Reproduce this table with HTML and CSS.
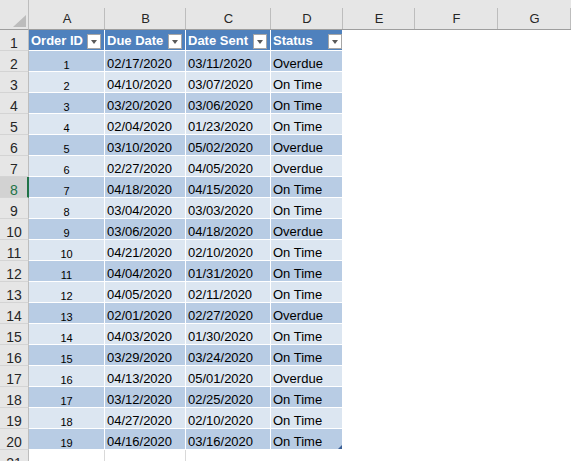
FILE: index.html
```html
<!DOCTYPE html>
<html>
<head>
<meta charset="utf-8">
<link rel="stylesheet" href="styles.css">
</head>
<body>
<div class="sheet">
  <div class="row hdr">
    <div class="corner"><span class="tri"></span></div>
    <div class="ch">A</div><div class="ch">B</div><div class="ch">C</div><div class="ch">D</div><div class="ch">E</div><div class="ch">F</div><div class="ch">G</div>
  </div>
  <div class="row">
    <div class="rh">1</div>
    <div class="th"><span class="tt">Order ID</span><span class="fb"><span class="ar"></span></span></div>
    <div class="th"><span class="tt">Due Date</span><span class="fb"><span class="ar"></span></span></div>
    <div class="th"><span class="tt">Date Sent</span><span class="fb"><span class="ar"></span></span></div>
    <div class="th last"><span class="tt">Status</span><span class="fb fb-end"><span class="ar"></span></span></div>
    <div class="e"></div><div class="e"></div><div class="e"></div>
  </div>
  <div class="row"><div class="rh">2</div><div class="c id b1">1</div><div class="c b1">02/17/2020</div><div class="c b1">03/11/2020</div><div class="c b1 last">Overdue</div><div class="e"></div><div class="e"></div><div class="e"></div></div>
  <div class="row"><div class="rh">3</div><div class="c id b2">2</div><div class="c b2">04/10/2020</div><div class="c b2">03/07/2020</div><div class="c b2 last">On Time</div><div class="e"></div><div class="e"></div><div class="e"></div></div>
  <div class="row"><div class="rh">4</div><div class="c id b1">3</div><div class="c b1">03/20/2020</div><div class="c b1">03/06/2020</div><div class="c b1 last">On Time</div><div class="e"></div><div class="e"></div><div class="e"></div></div>
  <div class="row"><div class="rh">5</div><div class="c id b2">4</div><div class="c b2">02/04/2020</div><div class="c b2">01/23/2020</div><div class="c b2 last">On Time</div><div class="e"></div><div class="e"></div><div class="e"></div></div>
  <div class="row"><div class="rh">6</div><div class="c id b1">5</div><div class="c b1">03/10/2020</div><div class="c b1">05/02/2020</div><div class="c b1 last">Overdue</div><div class="e"></div><div class="e"></div><div class="e"></div></div>
  <div class="row"><div class="rh">7</div><div class="c id b2">6</div><div class="c b2">02/27/2020</div><div class="c b2">04/05/2020</div><div class="c b2 last">Overdue</div><div class="e"></div><div class="e"></div><div class="e"></div></div>
  <div class="row"><div class="rh sel">8</div><div class="c id b1">7</div><div class="c b1">04/18/2020</div><div class="c b1">04/15/2020</div><div class="c b1 last">On Time</div><div class="e"></div><div class="e"></div><div class="e"></div></div>
  <div class="row"><div class="rh">9</div><div class="c id b2">8</div><div class="c b2">03/04/2020</div><div class="c b2">03/03/2020</div><div class="c b2 last">On Time</div><div class="e"></div><div class="e"></div><div class="e"></div></div>
  <div class="row"><div class="rh">10</div><div class="c id b1">9</div><div class="c b1">03/06/2020</div><div class="c b1">04/18/2020</div><div class="c b1 last">Overdue</div><div class="e"></div><div class="e"></div><div class="e"></div></div>
  <div class="row"><div class="rh">11</div><div class="c id b2">10</div><div class="c b2">04/21/2020</div><div class="c b2">02/10/2020</div><div class="c b2 last">On Time</div><div class="e"></div><div class="e"></div><div class="e"></div></div>
  <div class="row"><div class="rh">12</div><div class="c id b1">11</div><div class="c b1">04/04/2020</div><div class="c b1">01/31/2020</div><div class="c b1 last">On Time</div><div class="e"></div><div class="e"></div><div class="e"></div></div>
  <div class="row"><div class="rh">13</div><div class="c id b2">12</div><div class="c b2">04/05/2020</div><div class="c b2">02/11/2020</div><div class="c b2 last">On Time</div><div class="e"></div><div class="e"></div><div class="e"></div></div>
  <div class="row"><div class="rh">14</div><div class="c id b1">13</div><div class="c b1">02/01/2020</div><div class="c b1">02/27/2020</div><div class="c b1 last">Overdue</div><div class="e"></div><div class="e"></div><div class="e"></div></div>
  <div class="row"><div class="rh">15</div><div class="c id b2">14</div><div class="c b2">04/03/2020</div><div class="c b2">01/30/2020</div><div class="c b2 last">On Time</div><div class="e"></div><div class="e"></div><div class="e"></div></div>
  <div class="row"><div class="rh">16</div><div class="c id b1">15</div><div class="c b1">03/29/2020</div><div class="c b1">03/24/2020</div><div class="c b1 last">On Time</div><div class="e"></div><div class="e"></div><div class="e"></div></div>
  <div class="row"><div class="rh">17</div><div class="c id b2">16</div><div class="c b2">04/13/2020</div><div class="c b2">05/01/2020</div><div class="c b2 last">Overdue</div><div class="e"></div><div class="e"></div><div class="e"></div></div>
  <div class="row"><div class="rh">18</div><div class="c id b1">17</div><div class="c b1">03/12/2020</div><div class="c b1">02/25/2020</div><div class="c b1 last">On Time</div><div class="e"></div><div class="e"></div><div class="e"></div></div>
  <div class="row"><div class="rh">19</div><div class="c id b2">18</div><div class="c b2">04/27/2020</div><div class="c b2">02/10/2020</div><div class="c b2 last">On Time</div><div class="e"></div><div class="e"></div><div class="e"></div></div>
  <div class="row"><div class="rh">20</div><div class="c id b1">19</div><div class="c b1">04/16/2020</div><div class="c b1">03/16/2020</div><div class="c b1 last handle">On Time</div><div class="e"></div><div class="e"></div><div class="e"></div></div>
  <div class="row"><div class="rh">21</div><div class="g"></div><div class="g"></div><div class="e"></div><div class="e"></div><div class="e"></div><div class="e"></div><div class="e"></div></div>
</div>
</body>
</html>
```
FILE: styles.css
```css
* { box-sizing: border-box; }
html, body { margin: 0; padding: 0; background: #fff; }
body { width: 571px; height: 461px; overflow: hidden; font-family: "Liberation Sans", Arial, sans-serif; color: #000; }

.sheet { width: 571px; }

.row {
  display: grid;
  grid-template-columns: 29px 76px 81px 85px 72px 72px 83px 1fr;
  height: 21px;
}
.row.hdr { height: 30px; }

.corner {
  position: relative;
  background: #e6e6e6;
  border-bottom: 1px solid #9e9e9e;
  border-right: 1px solid #bdbdbd;
}
.tri {
  position: absolute;
  right: 2px;
  bottom: 2px;
  width: 0;
  height: 0;
  border-style: solid;
  border-width: 0 0 12px 13px;
  border-color: transparent transparent #bcbcbc transparent;
}

.ch {
  background: linear-gradient(#bdbdbd, #bdbdbd) right bottom / 1px 21px no-repeat, #e6e6e6;
  border-bottom: 1px solid #9e9e9e;
  text-align: center;
  font-size: 13px;
  line-height: 20px;
  padding-top: 9px;
  color: #262626;
}

.rh {
  background: #e6e6e6;
  border-right: 1px solid #bdbdbd;
  border-bottom: 1px solid #d4d4d4;
  text-align: center;
  font-size: 14px;
  line-height: 20px;
  padding-top: 3px;
  color: #262626;
  overflow: hidden;
}
.rh.sel {
  background: #d2d2d2;
  color: #217346;
  border-right: 2px solid #217346;
  padding-left: 1px;
}

.th {
  display: flex;
  background: #4f81bd;
  border-right: 1px solid #fff;
  border-bottom: 1px solid #fff;
  color: #fff;
  font-weight: bold;
  font-size: 13px;
  line-height: 20px;
  padding-left: 2px;
  overflow: hidden;
}
.tt { padding-top: 1px; white-space: nowrap; }
.fb {
  margin-left: auto;
  margin-right: 3px;
  margin-top: 4px;
  width: 14px;
  height: 15px;
  background: #fff;
  border: 1px solid #a6a6a6;
  display: flex;
  align-items: center;
  justify-content: center;
  flex: none;
}
.fb-end { margin-right: 0; }
.ar {
  width: 0;
  height: 0;
  border-style: solid;
  border-width: 4px 3.5px 0 3.5px;
  border-color: #595959 transparent transparent transparent;
  margin-top: 1px;
}

.c {
  border-right: 1px solid #fff;
  border-bottom: 1px solid #fff;
  font-size: 13px;
  line-height: 20px;
  padding: 3px 2px 0;
  white-space: nowrap;
  overflow: hidden;
}
.c.id { text-align: center; font-size: 11px; padding-top: 4px; }
.b1 { background: #b8cce4; }
.b2 { background: #dce6f1; }

.handle { position: relative; }
.handle::after {
  content: "";
  position: absolute;
  right: 0;
  bottom: 0;
  width: 0;
  height: 0;
  border-style: solid;
  border-width: 0 0 4px 4px;
  border-color: transparent transparent #3a5f95 transparent;
}

.e { background: #fff; }
.g { border-right: 1px solid #d9d9d9; }
```
